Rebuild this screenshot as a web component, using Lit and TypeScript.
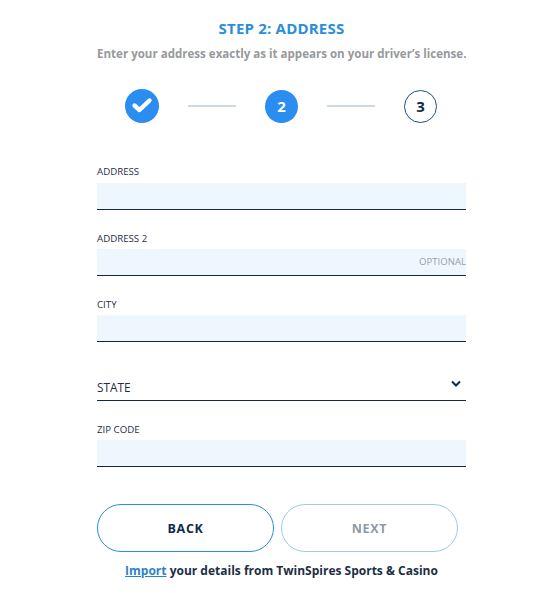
import { LitElement, html, css } from "lit";
import { customElement } from "lit/decorators.js";

@customElement("app-root")
export class AppRoot extends LitElement {
  static styles = css`
    :host { display: block; width: 550px; height: 593px; background: #fff; font-family: "Open Sans", sans-serif; color: #0f2a4a; overflow: hidden; }
    .wrap { width: 369px; margin-left: 97px; display: flex; flex-direction: column; }
    h1 { margin: 18px 0 0; height: 20px; font-size: 15px; line-height: 20px; font-weight: 700; color: #2b8ddd; text-align: center; letter-spacing: 0.2px; }
    .sub { margin-top: 7px; height: 18px; font-size: 11.55px; line-height: 18px; font-weight: 700; color: #97999c; text-align: center; white-space: nowrap; }
    .steps { margin-top: 26px; height: 34px; display: flex; align-items: center; padding: 0 29px 0 28px; }
    .dot { width: 34px; height: 34px; flex: none; box-sizing: border-box; border-radius: 50%; background: #2b8def; color: #fff; display: flex; align-items: center; justify-content: center; font-weight: 700; font-size: 15px; }
    .dot.small { width: 33px; height: 33px; }
    .dot.off { background: #fff; border: 1px solid #1a4f86; color: #0f2a4a; }
    .line { width: 48px; height: 2px; background: #ccd8e6; margin: 0 29px; }
    .field { display: flex; flex-direction: column; }
    label { display: block; height: 14px; font-size: 9.7px; line-height: 14px; color: #1c2e44; }
    .field.low label { padding-top: 1px; height: 13px; }
    .box { height: 26px; margin-top: 4px; background: #eff7fe; border-bottom: 1px solid #0f2a44; display: flex; align-items: flex-end; justify-content: flex-end; }
    .opt { font-size: 9.6px; line-height: 13px; height: 13px; margin-bottom: 7px; color: #9aa1a8; }
    .state { margin-top: 30px; height: 28px; border-bottom: 1px solid #0f2a44; display: flex; align-items: flex-start; justify-content: space-between; font-size: 11.8px; }
    .state span { line-height: 16px; margin-top: 7px; color: #1c2e44; }
    .state svg { margin: 8px 5px 0 0; }
    .btns { margin-top: 37px; display: flex; gap: 7px; }
    .btn { width: 177px; height: 48px; box-sizing: border-box; border-radius: 24px; border: 1px solid #2b8ddd; background: #fff; display: flex; align-items: center; justify-content: center; font-weight: 700; font-size: 12.5px; letter-spacing: 0.7px; color: #0f2a4a; }
    .btn.dim { border-color: #9ecbee; color: #8d99a6; }
    .imp { margin-top: 3px; height: 32px; font-size: 12px; line-height: 32px; font-weight: 700; text-align: center; white-space: nowrap; color: #1c2e44; }
    .imp a { color: #2b82cc; text-decoration: underline; }
  `;
  render() {
    const f = (l: string, mt: number, low: boolean, opt = false) => html`<div class="field ${low ? "low" : ""}" style="margin-top:${mt}px"><label>${l}</label><div class="box">${opt ? html`<span class="opt">OPTIONAL</span>` : ""}</div></div>`;
    return html`<div class="wrap">
      <h1>STEP 2: ADDRESS</h1>
      <div class="sub">Enter your address exactly as it appears on your driver’s license.</div>
      <div class="steps">
        <div class="dot"><svg width="22" height="18" viewBox="0 0 22 18"><path d="M3.5 8.5 L8.5 13 L18.5 3.5" fill="none" stroke="#fff" stroke-width="4.4" stroke-linecap="round" stroke-linejoin="round"/></svg></div>
        <div class="line"></div>
        <div class="dot small">2</div>
        <div class="line"></div>
        <div class="dot small off">3</div>
      </div>
      ${f("ADDRESS", 42, false)}
      ${f("ADDRESS 2", 21, true, true)}
      ${f("CITY", 21, true)}
      <div class="state"><span>STATE</span><svg width="10" height="8" viewBox="0 0 10 8"><path d="M1 1.5 L5 5.5 L9 1.5" fill="none" stroke="#0f2a4a" stroke-width="2"/></svg></div>
      ${f("ZIP CODE", 21, true)}
      <div class="btns"><div class="btn">BACK</div><div class="btn dim">NEXT</div></div>
      <div class="imp"><a>Import</a> your details from TwinSpires Sports &amp; Casino</div>
    </div>`;
  }
}
